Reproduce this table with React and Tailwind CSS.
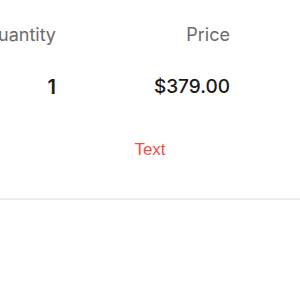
export default function App() {
  return (
    <div className="w-[300px] h-[300px] bg-white overflow-hidden font-['Inter',sans-serif]">
      <div className="flex pt-[24px] h-[55px]">
        <div className="w-[56px] shrink-0 flex justify-end text-[18px] leading-[22px] text-[#6b6b6b] whitespace-nowrap">
          Quantity
        </div>
        <div className="w-[174px] shrink-0 flex justify-end text-[18px] leading-[22px] text-[#6b6b6b]">
          Price
        </div>
      </div>
      <div className="flex pt-[20px] h-[85px]">
        <div className="w-[56px] shrink-0 flex justify-end text-[20px] leading-[24px] font-semibold text-[#1a1a1a]">
          1
        </div>
        <div className="w-[174px] shrink-0 flex justify-end text-[19px] leading-[24px] font-medium text-[#1a1a1a]">
          $379.00
        </div>
      </div>
      <div className="flex justify-center text-[17px] leading-[20px] text-[#f0503f] font-['Liberation_Sans',sans-serif]">
        Text
      </div>
      <div className="mt-[38px] h-[2px] bg-[#ebebeb]" />
    </div>
  );
}
